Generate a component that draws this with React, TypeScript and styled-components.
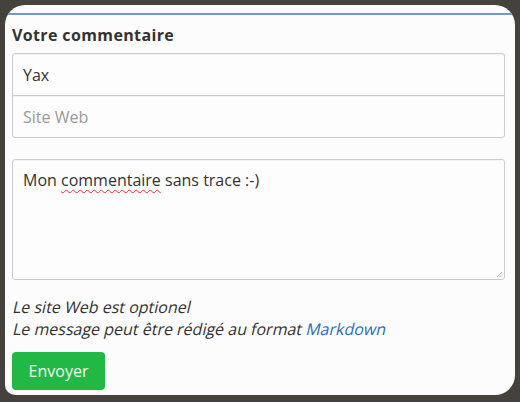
import React from 'react'
import styled, { createGlobalStyle } from 'styled-components';

const GlobalStyle = createGlobalStyle`
  html, body {
    margin: 0;
    padding: 0;
    background: #45423d;
  }
  body {
    font-family: "Open Sans", "Liberation Sans", sans-serif;
    color: #333;
  }
`;

const Page = styled.div`
  width: 520px;
  height: 402px;
  padding: 5px 5px 7px 5px;
  box-sizing: border-box;
`;

const Card = styled.div`
  width: 510px;
  height: 390px;
  background: #fcfcfc;
  border-radius: 20px 20px 20px 10px;
  overflow: hidden;
  padding-top: 8px;
  box-sizing: border-box;
`;

const TopLine = styled.div`
  height: 2px;
  background: #7399c4;
`;

const Form = styled.form`
  display: flex;
  flex-direction: column;
  padding: 0 10px 0 7px;
`;

const Title = styled.h3`
  margin: 9px 0 7px;
  font-size: 16px;
  line-height: 22px;
  font-weight: 700;
  letter-spacing: 0.37px;
  color: #333;
`;

const InputGroup = styled.div`
  display: flex;
  flex-direction: column;
`;

const InputField = styled.input`
  height: 43px;
  box-sizing: border-box;
  padding: 0 10px;
  border: 1px solid #ccc;
  border-radius: ${p => p.$first ? '3px 3px 0 0' : '0 0 3px 3px'};
  margin-top: ${p => p.$first ? '0' : '-1px'};
  background: #fdfdfd;
  font-family: "Open Sans", "Liberation Sans", sans-serif;
  font-size: 16px;
  color: #333;
  box-shadow: inset 0 1px 1px rgba(0, 0, 0, 0.04);
  outline: none;

  &::placeholder {
    color: #999;
  }
`;

const TextArea = styled.div`
  position: relative;
  margin-top: 21px;
  height: 121px;
  box-sizing: border-box;
  padding: 9px 10px;
  border: 1px solid #ccc;
  border-radius: 3px;
  background: #fdfdfd;
  font-size: 16px;
  line-height: 22px;
  color: #333;
  box-shadow: inset 0 1px 1px rgba(0, 0, 0, 0.04);
`;

const Misspelled = styled.span`
  text-decoration: underline wavy #d33;
  text-decoration-thickness: 1px;
  text-underline-offset: 3px;
`;

const Grip = styled.svg`
  position: absolute;
  right: 1px;
  bottom: 1px;
`;

const Notes = styled.div`
  margin-top: 16px;
  font-size: 16px;
  line-height: 22px;
  color: #333;
`;

const NoteLine = styled.div`
  transform: skewX(-13deg);
  transform-origin: 0 17px;
`;

const Link = styled.a`
  color: #2a6ebb;
  text-decoration: none;
`;

const SendButton = styled.button`
  align-self: flex-start;
  margin-top: 12px;
  width: 93px;
  height: 38px;
  border: none;
  border-radius: 4px;
  background: #22b845;
  color: #f0fdf0;
  font-family: "Open Sans", "Liberation Sans", sans-serif;
  font-size: 16px;
  cursor: pointer;
`;

const App = () => {
    return (
        <>
            <GlobalStyle />
            <Page>
                <Card>
                    <TopLine />
                    <Form onSubmit={(e: React.FormEvent) => e.preventDefault()}>
                        <Title>Votre commentaire</Title>
                        <InputGroup>
                            <InputField $first type="text" name="name" defaultValue="Yax" />
                            <InputField type="text" name="site" placeholder="Site Web" />
                        </InputGroup>
                        <TextArea role="textbox" aria-multiline="true">
                            Mon <Misspelled>commentaire</Misspelled> sans trace :-)
                            <Grip width="7" height="7" viewBox="0 0 7 7">
                                <path d="M6 1 L1 6 M6 3.5 L3.5 6 M6 5.5 L5.5 6" stroke="#bbb" strokeWidth="1" />
                            </Grip>
                        </TextArea>
                        <Notes>
                            <NoteLine>Le site Web est optionel</NoteLine>
                            <NoteLine>Le message peut être rédigé au format <Link href="#">Markdown</Link></NoteLine>
                        </Notes>
                        <SendButton type="submit">Envoyer</SendButton>
                    </Form>
                </Card>
            </Page>
        </>
    )
}

export default App
